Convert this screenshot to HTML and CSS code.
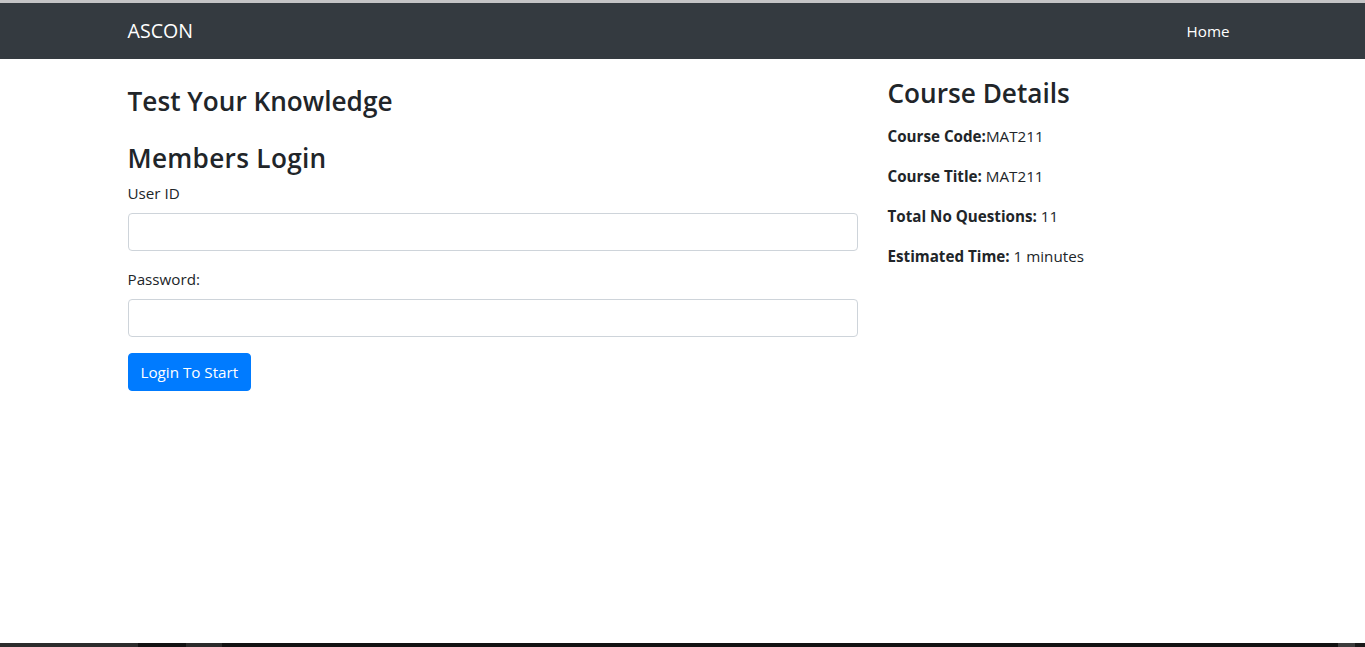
FILE: index.html
```html
<!DOCTYPE html>
<html lang="en">
<head>
<meta charset="utf-8">
<title>ASCON - Test Your Knowledge</title>
<link rel="stylesheet" href="styles.css">
</head>
<body>
  <div class="top-strip"></div>
  <nav class="navbar">
    <div class="container navbar-inner">
      <a class="brand" href="#">ASCON</a>
      <ul class="nav">
        <li><a class="nav-link" href="#">Home</a></li>
      </ul>
    </div>
  </nav>

  <main class="main">
    <div class="container">
      <div class="row">
        <div class="col-left">
          <h3 class="heading heading-first">Test Your Knowledge</h3>
          <h3 class="heading heading-login">Members Login</h3>
          <form class="login-form">
            <div class="form-group">
              <label class="label" for="userid">User ID</label>
              <input class="form-control" type="text" id="userid">
            </div>
            <div class="form-group">
              <label class="label" for="password">Password:</label>
              <input class="form-control" type="password" id="password">
            </div>
            <button class="btn-primary" type="button">Login To Start</button>
          </form>
        </div>
        <div class="col-right">
          <h3 class="details-title">Course Details</h3>
          <p class="detail"><b>Course Code:</b>MAT211</p>
          <p class="detail"><b>Course Title:</b> MAT211</p>
          <p class="detail"><b>Total No Questions:</b> 11</p>
          <p class="detail"><b>Estimated Time:</b> 1 minutes</p>
        </div>
      </div>
    </div>
  </main>

  <div class="bottom-strip">
    <span class="seg seg-a"></span>
    <span class="seg seg-b"></span>
    <span class="seg seg-c"></span>
    <span class="seg seg-d"></span>
    <span class="seg seg-e"></span>
    <span class="seg seg-f"></span>
  </div>
</body>
</html>
```

FILE: styles.css
```css
* {
  box-sizing: border-box;
}

html, body {
  margin: 0;
  padding: 0;
}

body {
  font-family: "Open Sans", "Noto Sans", "Liberation Sans", sans-serif;
  font-size: 15.2px;
  line-height: 24px;
  color: #212529;
  background: #fff;
  min-height: 100vh;
  display: flex;
  flex-direction: column;
}

.top-strip {
  height: 3px;
  background: #c4c4c6;
  flex: 0 0 auto;
}

.container {
  width: 100%;
  max-width: 1140px;
  margin: 0 auto;
  padding: 0 15px;
}

/* Navbar */
.navbar {
  background: #343a40;
  height: 56px;
  flex: 0 0 auto;
}

.navbar-inner {
  height: 100%;
  display: flex;
  align-items: center;
  justify-content: space-between;
}

.brand {
  color: #fff;
  font-size: 19.6px;
  line-height: 30px;
  text-decoration: none;
}

.nav {
  list-style: none;
  margin: 0;
  padding: 0;
  display: flex;
}

.nav-link {
  display: block;
  padding: 8px 8px;
  color: #fff;
  text-decoration: none;
}

/* Main */
.main {
  flex: 1 0 auto;
  padding-top: 18px;
}

.row {
  display: flex;
  margin: 0 -15px;
}

.col-left {
  flex: 0 0 66.666667%;
  max-width: 66.666667%;
  padding: 0 15px;
}

.col-right {
  flex: 0 0 33.333333%;
  max-width: 33.333333%;
  padding: 0 15px;
}

.heading {
  font-size: 26.2px;
  font-weight: 600;
  line-height: 33.6px;
  margin: 0 0 8px;
}

.heading-first {
  margin-top: 8px;
  margin-bottom: 23px;
}

.heading-login {
  margin-bottom: 6px;
  letter-spacing: 0.3px;
}

.details-title {
  font-size: 26.2px;
  font-weight: 600;
  line-height: 33.6px;
  margin: 0 0 13px;
}

.label {
  display: inline-block;
  margin-bottom: 8px;
}

.form-group {
  margin-bottom: 16px;
}

.form-control {
  display: block;
  width: 100%;
  height: 38px;
  padding: 6px 12px;
  font: inherit;
  color: #495057;
  background: #fff;
  border: 1px solid #ced4da;
  border-radius: 4px;
}

.btn-primary {
  display: inline-block;
  font: inherit;
  line-height: 24px;
  padding: 6px 12px;
  color: #fff;
  background: #007bff;
  border: 1px solid #007bff;
  border-radius: 4px;
  cursor: pointer;
}

.detail {
  margin: 0 0 16px;
}

.detail b {
  font-weight: 700;
}

/* Bottom taskbar strip */
.bottom-strip {
  height: 4px;
  flex: 0 0 auto;
  display: flex;
  background: #111111;
}

.seg {
  display: block;
  height: 100%;
}

.seg-a { width: 138px; background: #2c2c2c; }
.seg-b { width: 48px; background: #121212; }
.seg-c { width: 36px; background: #2a2a2a; }
.seg-d { flex: 1; background: #121212; }
.seg-e { width: 17px; background: #3c3c3c; }
.seg-f { width: 10px; background: #1a1a1a; }
```
